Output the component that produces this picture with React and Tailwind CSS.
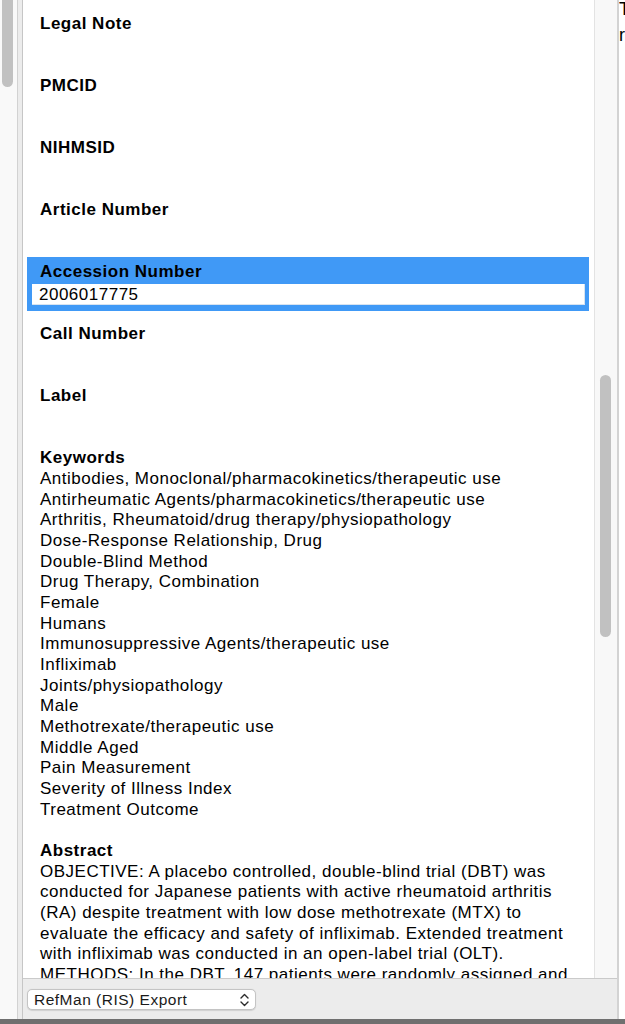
import React from "react";

const font = { fontFamily: '"Liberation Sans", Arial, Helvetica, sans-serif' };

const keywords = [
  "Antibodies, Monoclonal/pharmacokinetics/therapeutic use",
  "Antirheumatic Agents/pharmacokinetics/therapeutic use",
  "Arthritis, Rheumatoid/drug therapy/physiopathology",
  "Dose-Response Relationship, Drug",
  "Double-Blind Method",
  "Drug Therapy, Combination",
  "Female",
  "Humans",
  "Immunosuppressive Agents/therapeutic use",
  "Infliximab",
  "Joints/physiopathology",
  "Male",
  "Methotrexate/therapeutic use",
  "Middle Aged",
  "Pain Measurement",
  "Severity of Illness Index",
  "Treatment Outcome",
];

const abstractLines = [
  "OBJECTIVE: A placebo controlled, double-blind trial (DBT) was",
  "conducted for Japanese patients with active rheumatoid arthritis",
  "(RA) despite treatment with low dose methotrexate (MTX) to",
  "evaluate the efficacy and safety of infliximab. Extended treatment",
  "with infliximab was conducted in an open-label trial (OLT).",
  "METHODS: In the DBT, 147 patients were randomly assigned and",
];

function Field({ label, lines = [] }) {
  return (
    <div className="ml-[4px] w-[562px] pl-[13px] mb-[20.67px]">
      <div className="font-bold">{label}</div>
      {lines.length === 0 ? (
        <div className="h-[20.67px]" />
      ) : (
        lines.map((l, i) => (
          <div key={i} className="whitespace-nowrap">
            {l}
          </div>
        ))
      )}
    </div>
  );
}

function Chevrons() {
  return (
    <svg width="9" height="14" viewBox="0 0 9 14" fill="none">
      <path d="M1 5 L4.5 1.5 L8 5" stroke="#2b2b2b" strokeWidth="1.4" strokeLinecap="round" strokeLinejoin="round" />
      <path d="M1 9 L4.5 12.5 L8 9" stroke="#2b2b2b" strokeWidth="1.4" strokeLinecap="round" strokeLinejoin="round" />
    </svg>
  );
}

export default function App() {
  return (
    <div className="w-[625px] h-[1024px] flex flex-col overflow-hidden bg-white text-black" style={font}>
      <div className="flex-1 flex min-h-0">
        {/* left strip with scrollbar */}
        <div className="w-[17px] bg-[#f9f9f9] px-[2px]">
          <div className="w-[11px] h-[87px] rounded-b-full bg-[#c1c1c1]" />
        </div>
        <div className="w-px bg-[#d2d2d2]" />
        <div className="w-[4px] bg-[#ececec]" />
        <div className="w-px bg-[#c6c6c6]" />

        {/* main column */}
        <div className="w-[594px] flex flex-col">
          <div className="flex-1 flex min-h-0">
            <div className="w-[571px] overflow-hidden bg-white pt-[14px] text-[17px] leading-[20.67px] tracking-[0.5px]">
              <Field label="Legal Note" />
              <Field label="PMCID" />
              <Field label="NIHMSID" />
              <Field label="Article Number" />
              <div className="ml-[4px] w-[562px] bg-[#4099f6] pt-[5px] pb-[7px] -mt-[5px] mb-[13.67px]">
                <div className="pl-[13px] font-bold">Accession Number</div>
                <div className="ml-[5px] w-[553px] h-[21px] mt-[1px] bg-white border-b border-r border-[#d7e3f0] pl-[7px] leading-[21px] -mb-[1px]">
                  2006017775
                </div>
              </div>
              <Field label="Call Number" />
              <Field label="Label" />
              <Field label="Keywords" lines={keywords} />
              <Field label="Abstract" lines={abstractLines} />
            </div>
            {/* right scrollbar */}
            <div className="w-[23px] bg-[#f8f8f8] border-l border-[#e3e3e3] pt-[375px] pl-[5px]">
              <div className="w-[11px] h-[262px] rounded-full bg-[#c1c1c1]" />
            </div>
          </div>
          <div className="h-px bg-[#cacaca]" />
          <div className="h-[40px] bg-[#ececec] pt-[10px] pl-[4px]">
            <div className="w-[229px] h-[21px] bg-white border border-[#c4c4c4] rounded-[5px] shadow-[0_0.5px_1px_rgba(0,0,0,0.12)] flex items-center justify-between pl-[6px] pr-[6px]">
              <span className="text-[15.5px] leading-[19px] tracking-[0.5px] text-[#1a1a1a] whitespace-nowrap">RefMan (RIS) Export</span>
              <Chevrons />
            </div>
          </div>
        </div>

        <div className="w-[2px] bg-[#d3d3d3]" />
        {/* right cut-off pane */}
        <div className="w-[6px] bg-white overflow-hidden">
          <div className="-mt-[4px] text-[18px] leading-[26px] whitespace-nowrap">
            <div>T</div>
            <div>r</div>
          </div>
        </div>
      </div>
      <div className="h-[5px] bg-[#6f6f6f]" />
    </div>
  );
}
